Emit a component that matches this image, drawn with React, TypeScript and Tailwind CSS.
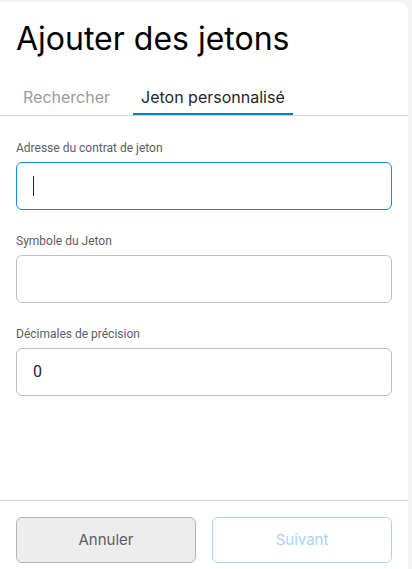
import { FC } from 'react';

interface FieldProps {
    label: string;
    value?: string;
    focused?: boolean;
}

const Field: FC<FieldProps> = ({ label, value, focused }) => (
    <div className="flex flex-col">
        <label className="text-[12px] leading-[16px] text-[#5b5d67] font-['Roboto',sans-serif]">
            {label}
        </label>
        <div
            className={
                focused
                    ? 'mt-[6px] flex h-[48px] items-center rounded-[6px] border border-[#0d8ee6] px-[16px]'
                    : 'mt-[6px] flex h-[48px] items-center rounded-[6px] border border-[#bbc0c5] px-[16px]'
            }
        >
            {focused && <div className="h-[20px] w-px bg-[#24272a]" />}
            {value && (
                <span className="text-[16px] text-[#24272a] font-['Roboto',sans-serif]">
                    {value}
                </span>
            )}
        </div>
    </div>
);

export default function App() {
    return (
        <div className="h-[569px] w-[412px] overflow-hidden bg-[#f2f3f4] pt-[2px] pr-[4px] font-['Inter',sans-serif]">
            <div className="flex h-full flex-col rounded-tr-[10px] bg-white">
                <h1 className="px-[16px] pt-[18px] text-[32px] leading-[38px] text-[#000]">
                    Ajouter des jetons
                </h1>
                <div className="mt-[27px] flex border-b border-[#d6d9dc] pl-[16px]">
                    <div className="border-b-2 border-transparent px-[7px] pb-[4px] text-[16px] leading-[24px] text-[#9b9b9b]">
                        Rechercher
                    </div>
                    <div className="ml-[16px] border-b-2 border-[#037dd6] px-[8px] pb-[4px] text-[16px] leading-[24px] text-[#24272a]">
                        Jeton personnalisé
                    </div>
                </div>
                <div className="flex flex-1 flex-col gap-[23px] px-[16px] pt-[24px]">
                    <Field label="Adresse du contrat de jeton" focused />
                    <Field label="Symbole du Jeton" />
                    <Field label="Décimales de précision" value="0" />
                </div>
                <div className="flex gap-[16px] border-t border-[#d6d9dc] px-[16px] pt-[16px] pb-[6px]">
                    <button className="h-[46px] flex-1 rounded-[6px] border border-[#b3b3b3] bg-[#ededed] text-[15px] text-[#5b5d67]">
                        Annuler
                    </button>
                    <button className="h-[46px] flex-1 rounded-[6px] border border-[#a8d5f7] bg-white text-[15px] text-[#a8d5f7]">
                        Suivant
                    </button>
                </div>
            </div>
        </div>
    );
}
